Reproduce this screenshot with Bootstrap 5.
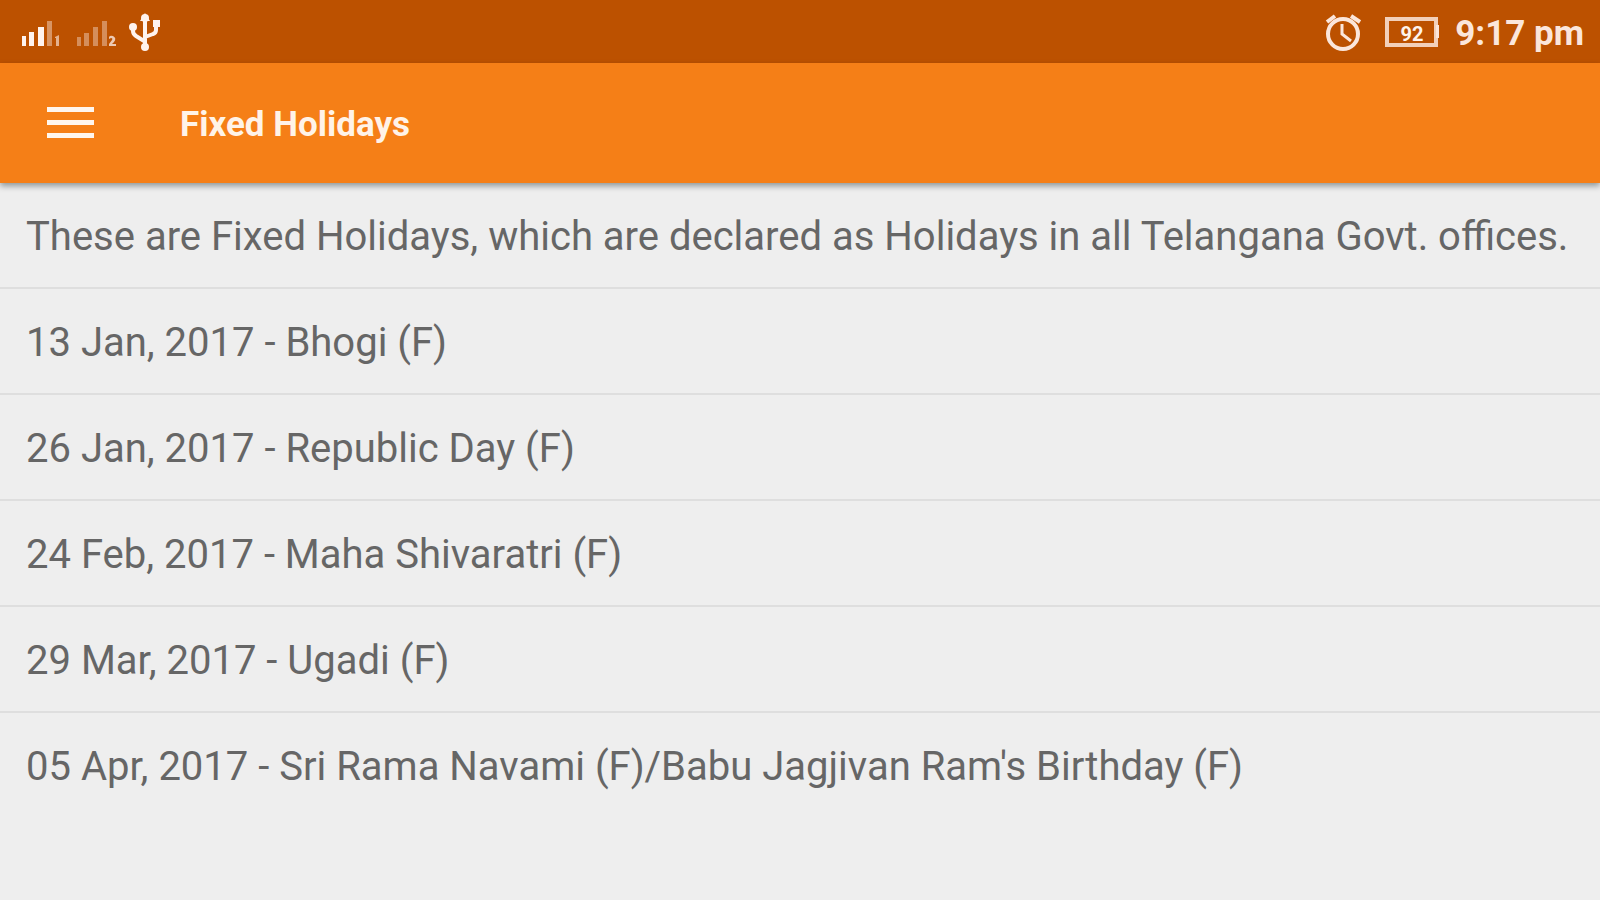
<!DOCTYPE html>
<html lang="en">
<head>
<meta charset="utf-8">
<meta name="viewport" content="width=device-width, initial-scale=1">
<title>Fixed Holidays</title>
<link href="https://cdn.jsdelivr.net/npm/bootstrap@5.3.0/dist/css/bootstrap.min.css" rel="stylesheet">
<style>
  body { font-family: Roboto, "Liberation Sans", sans-serif; background: #eee; color: #666; }
  .status-bar { height: 63px; background: #bc5100; color: #fbe6db; padding: 0 16px 0 20px; }
  .clock { font-size: 35px; line-height: 40px; font-weight: 700; padding-top: 4px; }
  .app-bar { height: 120px; background: #f57f17; padding: 0 36px; gap: 74px; box-shadow: 0 3px 6px rgba(0, 20, 20, .4); z-index: 1; }
  .menu-btn { padding: 10px; line-height: 0; }
  .app-title { font-size: 35px; line-height: 40px; font-weight: 700; color: #fff3e8; padding-top: 4px; }
  .holiday-list { --bs-list-group-bg: transparent; --bs-list-group-color: #666; --bs-list-group-border-color: #dedede; }
  .holiday-list .list-group-item { font-size: 40px; line-height: 48px; padding: 30px 26px 26px; border-width: 0 0 2px; }
</style>
</head>
<body>
<header class="sticky-top">
  <div class="status-bar d-flex align-items-center justify-content-between">
    <div class="d-flex align-items-center">
      <svg width="142" height="46" viewBox="20 8 142 46" role="img" aria-label="Signal and USB">
        <g fill="#fff3ee">
          <path d="M22 35h4v10h-4zM29 31h5v14h-5zM38 26h6v19h-6z"/>
          <path d="M47 20h5v25h-5z" opacity=".42"/>
          <path d="M55 36l4-2v11h-3v-8h-1z" opacity=".6"/>
          <path d="M77 36h4v9h-4zM84 32h5v13h-5zM93 26h5v19h-5zM102 20h5v25h-5z" opacity=".38"/>
          <path d="M109 36q1-2 4-1q4 2 1 6l-2 2h4v2h-7v-2l3-4q1-2-1-2l-2 1z" opacity=".75"/>
        </g>
        <g fill="none" stroke="#fff3ee" stroke-width="4" stroke-linejoin="round">
          <path d="M145 19v26M133 27v3q0 3 3 5l8 5M156 24v5q0 3-3 4l-8 3"/>
        </g>
        <g fill="#fff3ee"><path d="M145 12l5 8h-10z"/><circle cx="145" cy="17" r="4"/><circle cx="133" cy="26" r="4"/><path d="M153 19h7v7h-7z"/><circle cx="145" cy="46" r="4"/></g>
      </svg>
    </div>
    <div class="d-flex align-items-center">
      <svg class="me-3" width="115" height="46" viewBox="1326 8 115 46" role="img" aria-label="Alarm set, battery 92 percent">
        <g fill="none" stroke="#fbe6db" stroke-width="4">
          <circle cx="1345" cy="33" r="15"/>
          <path d="M1344 23v10l9 7" stroke-width="3"/>
          <path d="M1329 21l8-6M1353 15l9 6"/>
          <path d="M1389 18h49v26h-49z" opacity=".85"/>
        </g>
        <path d="M1438 24h3v13h-3z" fill="#fbe6db"/>
        <text x="1414" y="40" text-anchor="middle" font-family="Roboto, sans-serif" font-size="20" font-weight="700" fill="#fff3ec">92</text>
      </svg>
      <span class="clock">9:17 pm</span>
    </div>
  </div>
  <nav class="app-bar d-flex align-items-center position-relative" aria-label="App bar">
    <button class="btn menu-btn border-0" type="button" aria-label="Open menu">
      <svg width="50" height="36" viewBox="0 0 50 36" fill="#fff6ee" aria-hidden="true"><path d="M1 2h47v5H1zM1 15h47v5H1zM1 28h47v5H1z"/></svg>
    </button>
    <h1 class="app-title mb-0">Fixed Holidays</h1>
  </nav>
</header>
<main>
  <ul class="list-group list-group-flush holiday-list">
    <li class="list-group-item">These are Fixed Holidays, which are declared as Holidays in all Telangana Govt. offices.</li>
    <li class="list-group-item">13 Jan, 2017 - Bhogi (F)</li>
    <li class="list-group-item">26 Jan, 2017 - Republic Day (F)</li>
    <li class="list-group-item">24 Feb, 2017 - Maha Shivaratri (F)</li>
    <li class="list-group-item">29 Mar, 2017 - Ugadi (F)</li>
    <li class="list-group-item border-bottom-0">05 Apr, 2017 - Sri Rama Navami (F)/Babu Jagjivan Ram's Birthday (F)</li>
  </ul>
</main>
<script src="https://cdn.jsdelivr.net/npm/bootstrap@5.3.0/dist/js/bootstrap.bundle.min.js"></script>
</body>
</html>
